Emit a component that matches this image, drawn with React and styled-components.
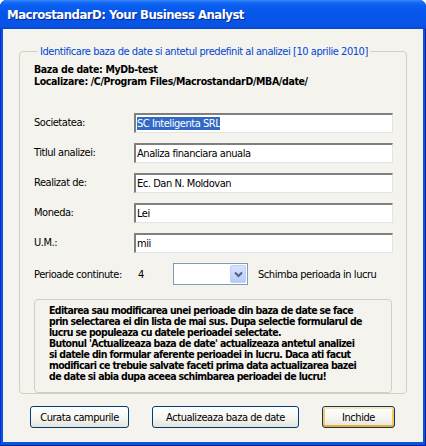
import React from "react"
import styled, { createGlobalStyle } from "styled-components"

const GlobalStyle = createGlobalStyle`
  html, body {
    margin: 0;
    padding: 0;
    background: #ffffff;
  }
  body {
    font-family: "DejaVu Sans Condensed", "DejaVu Sans", sans-serif;
    font-size: 11px;
    letter-spacing: -0.45px;
  }
`

const Frame = styled.div`
  width: 426px;
  height: 446px;
  box-sizing: border-box;
  display: flex;
  flex-direction: column;
  border-radius: 7px 7px 0 0;
  background: #0855dd;
  padding: 0 3px 4px 3px;
  box-shadow: inset 1px 0 0 #0831d9, inset -1px 0 0 #001ea0, inset 0 -1px 0 #001ea0;
`

const TitleBar = styled.div`
  height: 29px;
  margin: 0 -3px;
  padding: 0 7px;
  display: flex;
  align-items: center;
  border-radius: 7px 7px 0 0;
  background: linear-gradient(
    180deg,
    #3c8cf8 0px,
    #1a6ef6 2px,
    #0a5ef0 5px,
    #0558ea 12px,
    #0654e8 20px,
    #0a54e4 26px,
    #0446cc 29px
  );
  color: #ffffff;
  font-weight: bold;
  font-size: 13px;
  letter-spacing: -0.5px;
  text-shadow: 1px 1px 0 #0a2a8c;
`

const Body = styled.div`
  flex: 1;
  background: #f4f3ee;
  display: flex;
  flex-direction: column;
  padding: 0 16px;
`

const GroupBox = styled.fieldset`
  margin: 16px 0 0 0;
  padding: 6px 14px 0 14px;
  height: 349px;
  box-sizing: border-box;
  border: 1px solid #d0d0bf;
  border-radius: 4px;
  display: flex;
  flex-direction: column;
  min-width: 0;
`

const Legend = styled.legend`
  color: #0046d5;
  padding: 0 2px;
  margin-left: 4px;
  line-height: 13px;
  white-space: nowrap;
`

const DbInfo = styled.div`
  font-weight: bold;
  font-size: 10.5px;
  letter-spacing: -0.35px;
  line-height: 11.5px;
  color: #000000;
  white-space: nowrap;
`

const FormGrid = styled.div`
  display: grid;
  grid-template-columns: 100px 259px;
  grid-auto-rows: 20px;
  row-gap: 10px;
  margin-top: 26px;
  align-items: start;
`

const Label = styled.div`
  padding-top: 3px;
  color: #000000;
`

const TextBox = styled.div`
  height: 20px;
  box-sizing: border-box;
  background: #ffffff;
  border-style: solid;
  border-width: 2px 1px 1px 2px;
  border-color: #7f7f7f #e4e4e4 #e4e4e4 #7f7f7f;
  padding: 2px 0 0 1px;
  color: #000000;
  white-space: nowrap;
`

const Selected = styled.span`
  background: #316ac5;
  color: #ffffff;
`

const PeriodRow = styled.div`
  display: flex;
  align-items: center;
  margin-top: 10px;
  height: 22px;
`

const PeriodLabel = styled.span`
  width: 104px;
`

const PeriodCount = styled.span`
  width: 35px;
`

const Combo = styled.div`
  width: 75px;
  height: 22px;
  box-sizing: border-box;
  border: 1px solid #7f9db9;
  background: #ffffff;
  display: flex;
  justify-content: flex-end;
  padding: 1px;
  margin-right: 10px;
`

const ComboButton = styled.div`
  width: 16px;
  height: 18px;
  border-radius: 2px;
  background: linear-gradient(180deg, #d7e3fd 0%, #b7cbf7 100%);
  border: 1px solid #bdd0f9;
  box-sizing: border-box;
  display: flex;
  align-items: center;
  justify-content: center;
`

const InfoBox = styled.div`
  margin-top: 14px;
  height: 94px;
  box-sizing: border-box;
  border: 1px solid #d0d0bf;
  border-radius: 4px;
  padding: 5px 0 0 14px;
  font-weight: bold;
  font-size: 10.5px;
  line-height: 11px;
  letter-spacing: -0.62px;
  color: #000000;
  white-space: nowrap;
  overflow: hidden;
`

const ButtonRow = styled.div`
  display: flex;
  gap: 23px;
  padding-left: 11px;
  margin-top: 12px;
`

const XpButton = styled.button`
  height: 22px;
  width: ${({ $w }) => $w}px;
  box-sizing: border-box;
  border: 1px solid #003c74;
  border-radius: 3px;
  background: linear-gradient(180deg, #ffffff 0%, #f4f4f0 60%, #e3e2da 100%);
  font-family: inherit;
  font-size: 11px;
  letter-spacing: -0.45px;
  color: #000000;
  padding: 0;
  box-shadow: ${({ $focus }) =>
    $focus
      ? "inset 0 2px 0 #ffe8a6, inset 0 -2px 0 #f7a82a, inset 2px 0 0 #fbc55c, inset -2px 0 0 #fbc55c"
      : "none"};
`

function Chevron() {
  return (
    <svg width="9" height="7" viewBox="0 0 9 7">
      <path d="M1 1.5 L4.5 5 L8 1.5" stroke="#4d6185" strokeWidth="2" fill="none" />
    </svg>
  )
}

const fields = [
  { label: "Societatea:", value: "SC Inteligenta SRL", selected: true },
  { label: "Titlul analizei:", value: "Analiza financiara anuala" },
  { label: "Realizat de:", value: "Ec. Dan N. Moldovan" },
  { label: "Moneda:", value: "Lei" },
  { label: "U.M.:", value: "mii" },
]

export default function App() {
  return (
    <>
      <GlobalStyle />
      <Frame>
        <TitleBar>MacrostandarD: Your Business Analyst</TitleBar>
        <Body>
          <GroupBox>
            <Legend>Identificare baza de date si antetul predefinit al analizei [10 aprilie 2010]</Legend>
            <DbInfo>
              Baza de date: MyDb-test
              <br />
              Localizare: /C/Program Files/MacrostandarD/MBA/date/
            </DbInfo>
            <FormGrid>
              {fields.map((f) => (
                <React.Fragment key={f.label}>
                  <Label>{f.label}</Label>
                  <TextBox>{f.selected ? <Selected>{f.value}</Selected> : f.value}</TextBox>
                </React.Fragment>
              ))}
            </FormGrid>
            <PeriodRow>
              <PeriodLabel>Perioade continute:</PeriodLabel>
              <PeriodCount>4</PeriodCount>
              <Combo>
                <ComboButton>
                  <Chevron />
                </ComboButton>
              </Combo>
              <span>Schimba perioada in lucru</span>
            </PeriodRow>
            <InfoBox>
              Editarea sau modificarea unei perioade din baza de date se face
              <br />
              prin selectarea ei din lista de mai sus. Dupa selectie formularul de
              <br />
              lucru se populeaza cu datele perioadei selectate.
              <br />
              Butonul 'Actualizeaza baza de date' actualizeaza antetul analizei
              <br />
              si datele din formular aferente perioadei in lucru. Daca ati facut
              <br />
              modificari ce trebuie salvate faceti prima data actualizarea bazei
              <br />
              de date si abia dupa aceea schimbarea perioadei de lucru!
            </InfoBox>
          </GroupBox>
          <ButtonRow>
            <XpButton $w={99}>Curata campurile</XpButton>
            <XpButton $w={147}>Actualizeaza baza de date</XpButton>
            <XpButton $w={73} $focus>Inchide</XpButton>
          </ButtonRow>
        </Body>
      </Frame>
    </>
  )
}
